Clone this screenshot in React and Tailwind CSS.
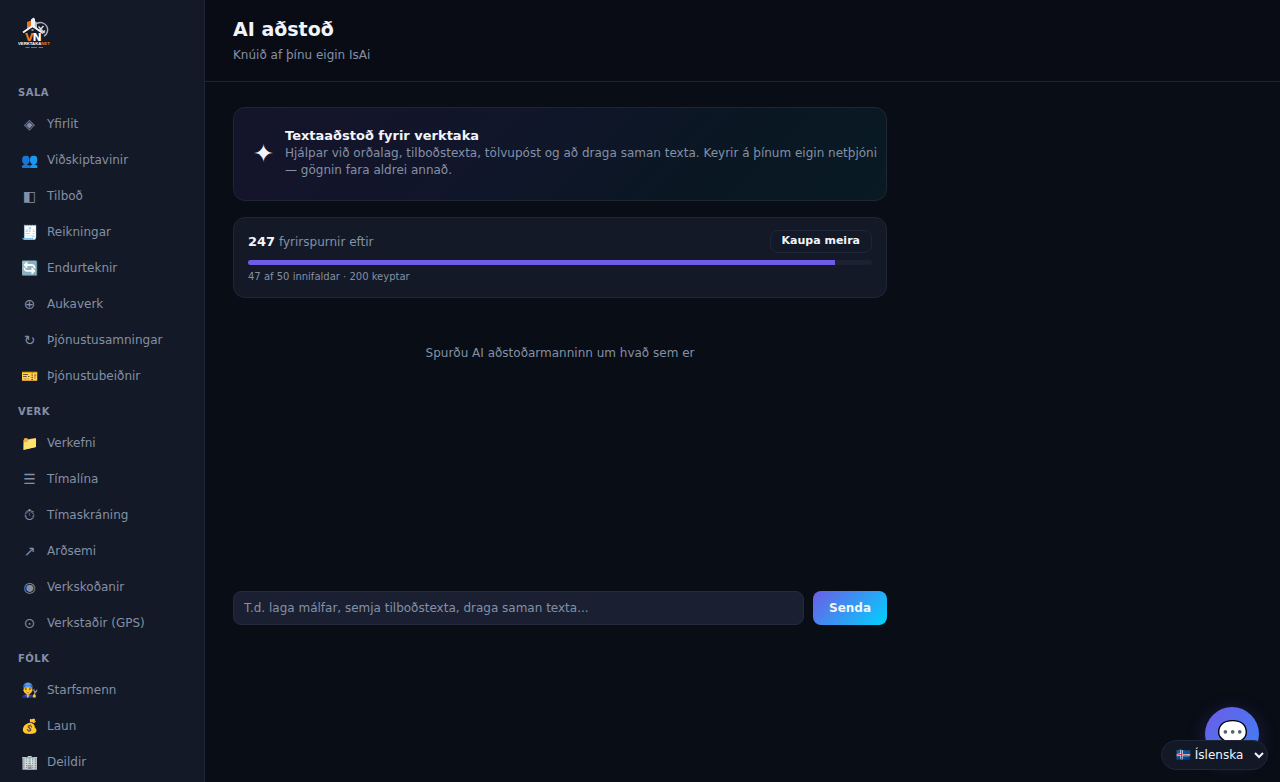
const NAV = [
    {
        title: "SALA",
        items: [
            { icon: "◈", label: "Yfirlit" },
            { icon: "👥", label: "Viðskiptavinir" },
            { icon: "◧", label: "Tilboð" },
            { icon: "🧾", label: "Reikningar" },
            { icon: "🔄", label: "Endurteknir" },
            { icon: "⊕", label: "Aukaverk" },
            { icon: "↻", label: "Þjónustusamningar" },
            { icon: "🎫", label: "Þjónustubeiðnir" },
        ],
    },
    {
        title: "VERK",
        items: [
            { icon: "📁", label: "Verkefni" },
            { icon: "☰", label: "Tímalína" },
            { icon: "⏱", label: "Tímaskráning" },
            { icon: "↗", label: "Arðsemi" },
            { icon: "◉", label: "Verkskoðanir" },
            { icon: "⊙", label: "Verkstaðir (GPS)" },
        ],
    },
    {
        title: "FÓLK",
        items: [
            { icon: "👨‍🔧", label: "Starfsmenn" },
            { icon: "💰", label: "Laun" },
            { icon: "🏢", label: "Deildir" },
        ],
    },
];

function Logo() {
    return (
        <svg viewBox="0 0 66 66" className="w-[33px] h-[33px]" role="img" aria-label="Verktakanet">
            {/* gear with tools */}
            <path d="M38 13a14 14 0 0 1 14 25" fill="none" stroke="#aab1bc" strokeWidth="3" />
            <path d="M41 19l12 13M51 18l-8 9M48 33l6-6" stroke="#d7dbe1" strokeWidth="3" />
            {/* buildings */}
            <path d="M18 10l8-3v14l-8 6z" fill="#e8751a" />
            <path d="M26 5l5-4 3 3v18h-8z" fill="#eef1f5" />
            <path d="M34 8l4 3v12l-4-3z" fill="#b4bac4" />
            {/* roof */}
            <path d="M29 20l16 11v8H13v-8z" fill="#131926" />
            <path d="M10 31l19-13 19 13" fill="none" stroke="#f3f5f8" strokeWidth="4" />
            <path d="M27 24h4v4h-4z" fill="#8d95a3" />
            <text x="14" y="47" fontSize="22" fontWeight="700" fill="#f07b1c">V</text>
            <text x="29" y="47" fontSize="22" fontWeight="700" fill="#ffffff">N</text>
            <text x="0" y="56" fontSize="8.5" fontWeight="700" fill="#ffffff" fontFamily="Liberation Sans">
                VERKTAKA<tspan fill="#f07b1c">NET</tspan>
            </text>
            <path d="M15 61h8M26 61h12M41 61h9" stroke="#6b7483" strokeWidth="2" />
        </svg>
    );
}

function Sidebar() {
    return (
        <aside className="w-[205px] shrink-0 h-screen overflow-hidden bg-[#131926] border-r border-[#1e2535]">
            <div className="px-[18px] pt-[17px] pb-[25px]">
                <Logo />
            </div>
            <nav>
                {NAV.map((group) => (
                    <div key={group.title}>
                        <h2 className="px-[18px] pt-3 pb-[7px] text-[10px] leading-[12px] font-bold tracking-wider text-[#8490a8]">
                            {group.title}
                        </h2>
                        {group.items.map((item) => (
                            <a
                                key={item.label}
                                href="#"
                                className="flex items-center gap-2 h-9 pl-5 text-[12px] text-[#8490a5] hover:text-white"
                            >
                                <span className="w-[19px] text-center text-[14px]">{item.icon}</span>
                                {item.label}
                            </a>
                        ))}
                    </div>
                ))}
            </nav>
        </aside>
    );
}

function Hero() {
    return (
        <section className="flex items-center gap-3 pl-5 pr-1 pt-[19px] pb-[21px] rounded-xl border border-[#1f2636] bg-[linear-gradient(135deg,#15142b,#10162a_45%,#0a1723_70%,#091a23)]">
            <span className="w-[19px] text-[25px] leading-[25px] flex justify-center">✦</span>
            <div>
                <h2 className="text-[13px] leading-[18px] font-bold">Textaaðstoð fyrir verktaka</h2>
                <p className="text-[12px] leading-[17px] text-[#8490a5]">
                    Hjálpar við orðalag, tilboðstexta, tölvupóst og að draga saman texta. Keyrir á þínum eigin netþjóni
                    — gögnin fara aldrei annað.
                </p>
            </div>
        </section>
    );
}

function Quota() {
    const percent = 94;

    return (
        <section className="mt-4 px-[14px] py-3 rounded-xl border border-[#1f2636] bg-[#131926]">
            <div className="flex items-center justify-between">
                <p className="text-[12px] leading-[18px] text-[#8490a5]">
                    <strong className="text-[13px] text-[#f1f4fa]">247</strong> fyrirspurnir eftir
                </p>
                <button className="h-[23px] px-[11px] rounded-lg border border-[#1f2636] text-[11px] font-bold">
                    Kaupa meira
                </button>
            </div>
            <div className="mt-[7px] h-[5px] rounded-full overflow-hidden bg-[#1b2130]">
                <div className="h-full bg-[#6c5ce7]" style={{ width: `${percent}%` }} />
            </div>
            <p className="mt-1 text-[10px] leading-[16px] text-[#8490a5]">47 af 50 innifaldar · 200 keyptar</p>
        </section>
    );
}

export default function App() {
    return (
        <div className="flex min-h-screen bg-[#090d15] text-[#f1f4fa] font-['DejaVu_Sans',sans-serif]">
            <Sidebar />
            <div className="flex-1 min-w-0">
                <header className="h-[82px] px-7 pt-4 border-b border-[#1e2535] bg-[#0a0c15]">
                    <h1 className="text-[19px] leading-[26px] font-bold">AI aðstoð</h1>
                    <p className="mt-[5px] text-[12px] leading-[16px] text-[#8490a5]">Knúið af þínu eigin IsAi</p>
                </header>
                <main className="px-7 pt-[25px]">
                    <div className="max-w-[654px]">
                        <Hero />
                        <Quota />
                        <div className="min-h-[293px] pt-[46px] text-center text-[12px] leading-[18px] text-[#8490a5]">
                            Spurðu AI aðstoðarmanninn um hvað sem er
                        </div>
                        <form className="flex gap-[9px]" onSubmit={(e) => e.preventDefault()}>
                            <input
                                type="text"
                                aria-label="Fyrirspurn"
                                placeholder="T.d. laga málfar, semja tilboðstexta, draga saman texta..."
                                className="flex-1 min-w-0 h-[34px] px-[10px] rounded-lg border border-[#232a3b] bg-[#1a2031] text-[12px] placeholder:text-[#8490a5]"
                            />
                            <button className="h-[34px] px-4 rounded-lg text-[12px] font-bold bg-[linear-gradient(135deg,#6c5ce7,#00d2ff)]">
                                Senda
                            </button>
                        </form>
                    </div>
                </main>
            </div>
            <button
                aria-label="Spjall"
                className="fixed right-[21px] bottom-[21px] size-[54px] rounded-full bg-[linear-gradient(135deg,#6c5ce7,#3b82f6)] text-[25px] shadow-[0_4px_20px_rgba(108,92,231,0.25)]"
            >
                💬
            </button>
            <select
                aria-label="Tungumál"
                className="fixed right-3 bottom-3 h-[30px] w-[107px] pl-[10px] rounded-full border border-[#1f2738] bg-[#121826] text-[12px]"
            >
                <option>🇮🇸 Íslenska</option>
                <option>🇬🇧 English</option>
            </select>
        </div>
    );
}
